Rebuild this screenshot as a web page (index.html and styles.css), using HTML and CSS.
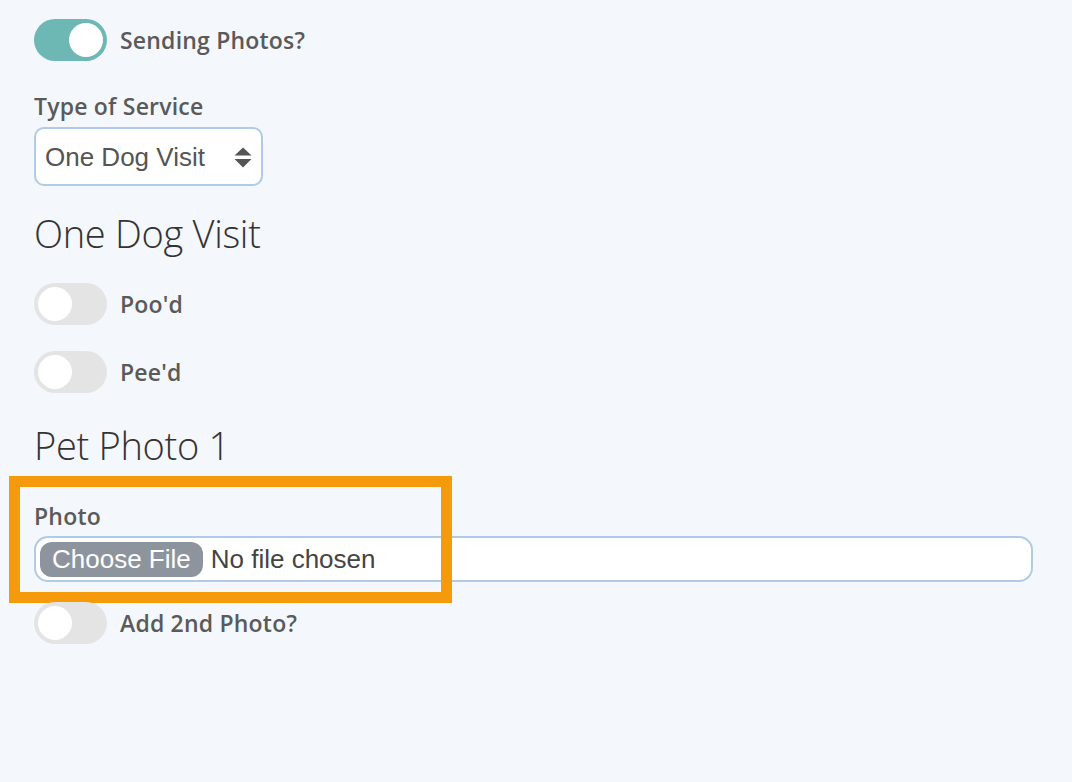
FILE: index.html
```html
<!DOCTYPE html>
<html lang="en">
<head>
    <meta charset="UTF-8"/>
    <meta name="viewport" content="width=device-width, initial-scale=1.0">
    <title>Visit Report</title>
    <link rel="stylesheet" href="styles.css">
</head>

<body>
    <main class="form">
        <label class="switch-row">
            <span class="switch on"><span class="knob"></span></span>
            <span class="switch-label">Sending Photos?</span>
        </label>

        <div class="field service">
            <label class="field-label" for="service">Type of Service</label>
            <div class="select-wrap">
                <select id="service" class="select">
                    <option>One Dog Visit</option>
                    <option>Two Dog Visit</option>
                </select>
                <svg class="select-arrows" width="18" height="21" viewBox="0 0 18 21">
                    <path d="M9 0.5 L17.5 8.5 L0.5 8.5 Z" fill="#555"/>
                    <path d="M9 20.5 L17.5 12 L0.5 12 Z" fill="#555"/>
                </svg>
            </div>
        </div>

        <h2 class="section-title">One Dog Visit</h2>

        <label class="switch-row">
            <span class="switch"><span class="knob"></span></span>
            <span class="switch-label">Poo'd</span>
        </label>

        <label class="switch-row pee">
            <span class="switch"><span class="knob"></span></span>
            <span class="switch-label">Pee'd</span>
        </label>

        <h2 class="section-title photo-title">Pet Photo 1</h2>

        <div class="field photo-field">
            <div class="highlight"></div>
            <label class="field-label" for="photo">Photo</label>
            <input id="photo" class="file-input" type="file">
        </div>

        <label class="switch-row second">
            <span class="switch"><span class="knob"></span></span>
            <span class="switch-label">Add 2nd Photo?</span>
        </label>
    </main>
</body>
</html>
```

FILE: styles.css
```css
* {
    margin: 0;
    padding: 0;
    box-sizing: border-box;
}

body {
    font-family: 'Open Sans', 'Liberation Sans', sans-serif;
    background-color: #f4f7fb;
    color: #555;
    min-height: 100vh;
}

.form {
    padding: 19px 34px;
    display: flex;
    flex-direction: column;
    align-items: flex-start;
}

.switch-row {
    display: flex;
    align-items: center;
    gap: 13px;
    height: 42px;
    cursor: pointer;
}

.switch {
    position: relative;
    width: 73px;
    height: 42px;
    border-radius: 21px;
    background-color: #e4e4e4;
    flex-shrink: 0;
}

.switch.on {
    background-color: #6db8b5;
}

.knob {
    position: absolute;
    top: 4px;
    left: 4px;
    width: 34px;
    height: 34px;
    border-radius: 50%;
    background-color: #fff;
}

.switch.on .knob {
    left: 35px;
}

.switch-label {
    font-size: 23px;
    font-weight: 600;
    color: #5a5a5a;
    line-height: 27px;
    letter-spacing: 0.2px;
}

.field {
    display: flex;
    flex-direction: column;
    width: 100%;
}

.field-label {
    font-size: 23px;
    font-weight: 600;
    line-height: 27px;
    color: #5a5a5a;
    letter-spacing: 0.2px;
    margin-bottom: 7px;
}

.service {
    margin-top: 32px;
}

.select-wrap {
    position: relative;
    width: 229px;
}

.select {
    appearance: none;
    -webkit-appearance: none;
    width: 229px;
    height: 59px;
    padding: 0 40px 0 9px;
    border: 2px solid #afcbe6;
    border-radius: 10px;
    background-color: #fff;
    font-family: 'Liberation Sans', Arial, sans-serif;
    font-size: 26px;
    color: #555;
    outline: none;
}

.select-arrows {
    position: absolute;
    top: 20px;
    right: 11px;
    pointer-events: none;
}

.section-title {
    font-size: 38px;
    font-weight: 300;
    line-height: 43px;
    color: #333;
    letter-spacing: -0.3px;
    margin: 26px 0 28px;
}

.pee {
    margin-top: 26px;
}

.photo-title {
    margin: 31px 0 0;
}

.photo-field {
    position: relative;
    margin-top: 36px;
}

.photo-field .field-label {
    margin-bottom: 6px;
}

.highlight {
    position: absolute;
    top: -27px;
    left: -25px;
    width: 443px;
    height: 127px;
    border: 11px solid #f59b0b;
    pointer-events: none;
}

.file-input {
    width: 999px;
    height: 46px;
    padding: 4px;
    border: 2px solid #afcbe6;
    border-radius: 14px;
    background-color: #fff;
    font-family: 'Liberation Sans', Arial, sans-serif;
    font-size: 26px;
    color: #444;
}

.file-input::file-selector-button {
    height: 35px;
    padding: 0 12px;
    margin-right: 8px;
    border: none;
    border-radius: 12px;
    background-color: #8e949e;
    color: #fff;
    font-family: 'Liberation Sans', Arial, sans-serif;
    font-size: 26px;
    cursor: pointer;
}

.second {
    margin-top: 20px;
}
```
